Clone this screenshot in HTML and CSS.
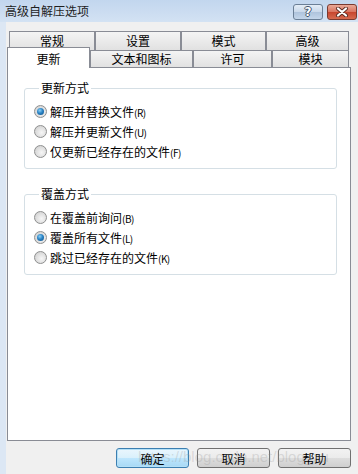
FILE: index.html
```html
<!DOCTYPE html>
<html lang="zh-CN">
<head>
    <meta charset="UTF-8">
    <meta name="viewport" content="width=device-width, initial-scale=1.0">
    <title>高级自解压选项</title>
    <link rel="stylesheet" href="styles.css">
</head>
<body>

    <div class="window">
        <div class="titlebar">
            <span class="title">高级自解压选项</span>
            <div class="caption-buttons">
                <span class="cap-btn help-btn">?</span>
                <span class="cap-btn close-btn">
                    <svg width="14" height="10" viewBox="0 0 14 10">
                        <path d="M3 1.5 L11 8.5 M11 1.5 L3 8.5" stroke="#5a2a22" stroke-width="4" stroke-linecap="round" fill="none"/>
                        <path d="M3 1.5 L11 8.5 M11 1.5 L3 8.5" stroke="#ffffff" stroke-width="2.2" stroke-linecap="round" fill="none"/>
                    </svg>
                </span>
            </div>
        </div>

        <div class="client">
            <div class="tab-row back-row">
                <div class="tab tab-general">常规</div>
                <div class="tab tab-setup">设置</div>
                <div class="tab tab-modes">模式</div>
                <div class="tab tab-advanced">高级</div>
            </div>
            <div class="tab-row front-row">
                <div class="tab tab-update selected">更新</div>
                <div class="tab tab-text">文本和图标</div>
                <div class="tab tab-license">许可</div>
                <div class="tab tab-module">模块</div>
            </div>

            <div class="panel">
                <fieldset class="group">
                    <legend>更新方式</legend>
                    <label class="radio-row"><span class="radio checked"></span><span>解压并替换文件<span class="key">(R)</span></span></label>
                    <label class="radio-row"><span class="radio"></span><span>解压并更新文件<span class="key">(U)</span></span></label>
                    <label class="radio-row"><span class="radio"></span><span>仅更新已经存在的文件<span class="key">(F)</span></span></label>
                </fieldset>

                <fieldset class="group second">
                    <legend>覆盖方式</legend>
                    <label class="radio-row"><span class="radio"></span><span>在覆盖前询问<span class="key">(B)</span></span></label>
                    <label class="radio-row"><span class="radio checked"></span><span>覆盖所有文件<span class="key">(L)</span></span></label>
                    <label class="radio-row"><span class="radio"></span><span>跳过已经存在的文件<span class="key">(K)</span></span></label>
                </fieldset>
            </div>

            <div class="button-row">
                <button class="dlg-btn default">确定</button>
                <button class="dlg-btn">取消</button>
                <button class="dlg-btn">帮助</button>
            </div>
        </div>

        <div class="watermark">https://blog.csdn.net/blog_xu</div>
    </div>

</body>
</html>
```

FILE: styles.css
```css
body {
    margin: 0;
    font-family: "Noto Sans CJK SC", "Liberation Sans", sans-serif;
    font-size: 12px;
    color: #000;
}

.window {
    position: relative;
    width: 358px;
    height: 474px;
    background: #f0f0f0;
    display: flex;
    flex-direction: column;
    overflow: hidden;
}

/* 标题栏 */
.titlebar {
    height: 22px;
    display: flex;
    align-items: center;
    justify-content: space-between;
    background: linear-gradient(#c2d6ee, #d3e2f3);
}

.title {
    padding-left: 5px;
    font-size: 12px;
    line-height: 14px;
    color: #1e1e1e;
}

.caption-buttons {
    display: flex;
    gap: 4px;
    padding-right: 1px;
    padding-top: 2px;
}

.cap-btn {
    width: 28px;
    height: 14px;
    border: 1px solid #6b7f96;
    border-radius: 3px;
    display: flex;
    align-items: center;
    justify-content: center;
}

.help-btn {
    background: linear-gradient(#e4edf7 0%, #c9d8ea 50%, #aec3dc 51%, #c4d6ea 100%);
    color: #fff;
    font-family: "DejaVu Sans", sans-serif;
    font-weight: bold;
    font-size: 12px;
    line-height: 14px;
    text-shadow: 1px 0 0 #44546a, -1px 0 0 #44546a, 0 1px 0 #44546a, 0 -1px 0 #44546a;
}

.close-btn {
    border-color: #7a3a30;
    background: linear-gradient(#e9a998 0%, #d9735f 50%, #c7452e 51%, #d66a4f 100%);
}

/* 窗口客户区 */
.client {
    flex: 1;
    border-left: 6px solid #dce7f4;
    padding: 9px 7px 0 1px;
}

.tab-row {
    display: flex;
    align-items: flex-end;
}

.back-row {
    height: 19px;
    margin-left: 2px;
}

.front-row {
    position: relative;
    z-index: 1;
    height: 20px;
    margin-top: -3px;
}

.tab {
    box-sizing: border-box;
    height: 19px;
    border: 1px solid #898c95;
    border-bottom: none;
    background: linear-gradient(#f4f4f4, #e1e1e1);
    text-align: center;
    line-height: 18px;
}

.front-row .tab {
    height: 17px;
    line-height: 16px;
}

.front-row .tab.selected {
    height: 21px;
    margin-bottom: -1px;
    padding-top: 3px;
    background: #fff;
}

.tab-general { width: 86px; }
.tab-setup { width: 86px; }
.tab-modes { width: 85px; }
.tab-advanced { width: 83px; }
.tab-update { width: 83px; }
.tab-text { width: 103px; }
.tab-license { width: 79px; }
.tab-module { width: 77px; }

.panel {
    box-sizing: border-box;
    height: 374px;
    border: 1px solid #898c95;
    background: #fff;
    padding-top: 13px;
}

/* 分组框 */
.group {
    width: 313px;
    box-sizing: border-box;
    margin: 0 0 0 16px;
    padding: 6px 0 7px 9px;
    border: 1px solid #d5dfe5;
    border-radius: 3px;
}

.group.second {
    margin-top: 18px;
}

.group legend {
    margin-left: 5px;
    padding: 0 2px;
    line-height: 14px;
}

.radio-row {
    display: flex;
    align-items: center;
    gap: 3px;
    height: 20px;
}

.key {
    font-size: 10px;
    letter-spacing: -0.5px;
}

.radio {
    box-sizing: border-box;
    width: 13px;
    height: 13px;
    border: 1px solid #8e8f8f;
    border-radius: 50%;
    background: radial-gradient(circle at 60% 60%, #f6f6f6 0%, #dcdcdc 60%, #c9c9c9 100%);
    display: flex;
    align-items: center;
    justify-content: center;
}

.radio.checked::after {
    content: "";
    width: 7px;
    height: 7px;
    border-radius: 50%;
    background: radial-gradient(circle at 40% 35%, #8cd0f5 0%, #2b84c6 45%, #0d4c80 100%);
}

/* 底部按钮 */
.button-row {
    display: flex;
    justify-content: flex-end;
    gap: 8px;
    margin-top: 7px;
}

.dlg-btn {
    width: 73px;
    height: 20px;
    padding: 0;
    font-family: inherit;
    font-size: 12px;
    border: 1px solid #707070;
    border-radius: 3px;
    background: linear-gradient(#f2f2f2 0%, #ebebeb 50%, #dddddd 51%, #cfcfcf 100%);
}

.dlg-btn.default {
    border-color: #3c7fb1;
    background: linear-gradient(#eaf6fd 0%, #d9f0fc 50%, #bee6fd 51%, #a7d9f5 100%);
    box-shadow: inset 0 0 0 1px #b4e0f7;
}

.watermark {
    position: absolute;
    left: 138px;
    top: 448px;
    font-family: "Liberation Sans", sans-serif;
    font-size: 15px;
    line-height: 18px;
    color: rgba(150, 150, 150, 0.28);
    pointer-events: none;
}
```
